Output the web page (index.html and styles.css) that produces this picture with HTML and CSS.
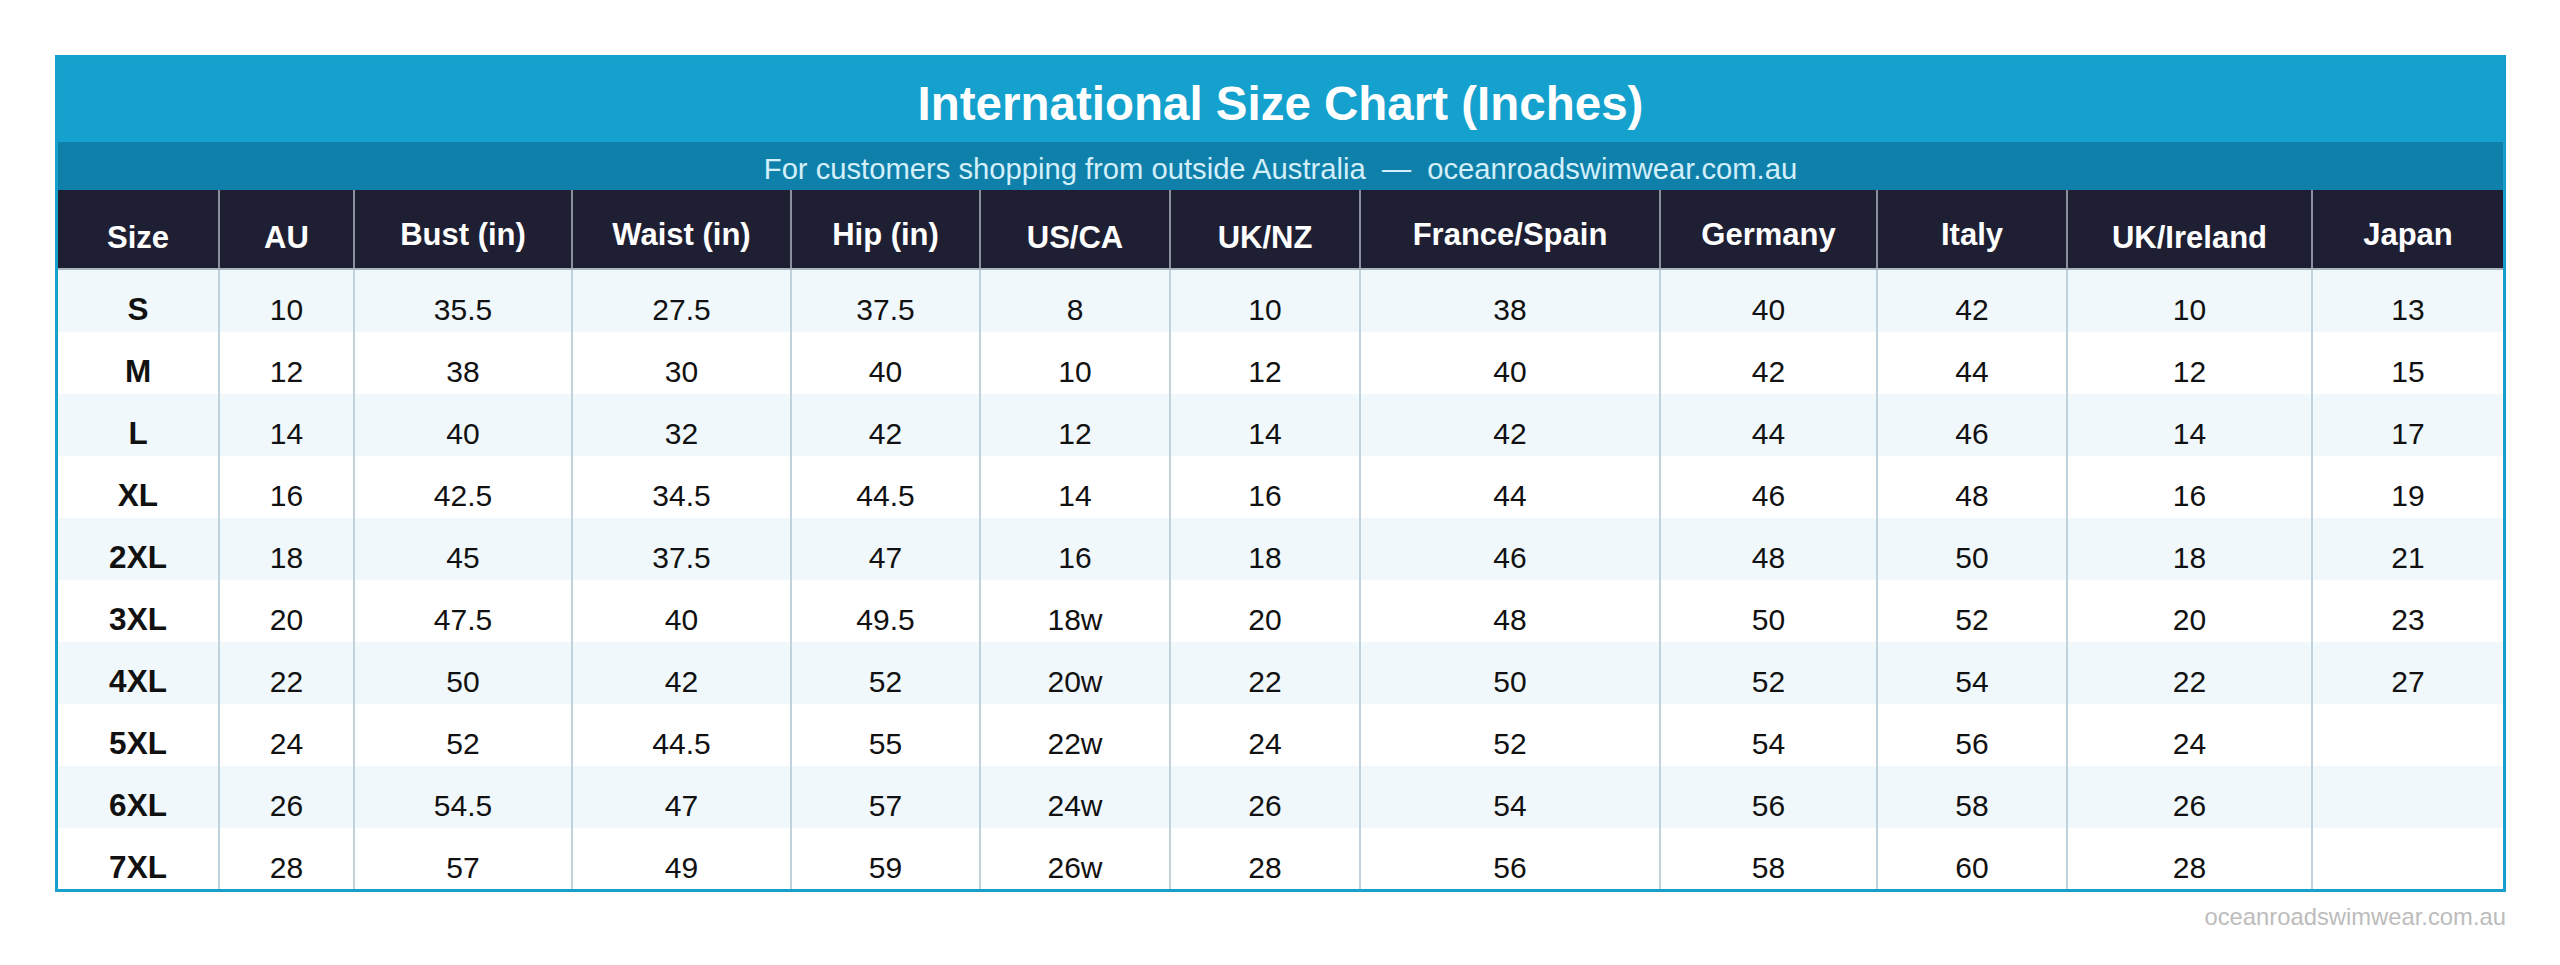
FILE: index.html
```html
<!DOCTYPE html>
<html lang="en">
<head>
<meta charset="utf-8">
<title>International Size Chart (Inches)</title>
<link rel="stylesheet" href="styles.css">
</head>
<body>
<div class="page">
  <div class="chart">
    <div class="title">International Size Chart (Inches)</div>
    <div class="subtitle">For customers shopping from outside Australia&nbsp; —&nbsp; oceanroadswimwear.com.au</div>
    <div class="row head">
      <div class="cell">Size</div>
      <div class="cell">AU</div>
      <div class="cell desc">Bust (in)</div>
      <div class="cell desc">Waist (in)</div>
      <div class="cell desc">Hip (in)</div>
      <div class="cell">US/CA</div>
      <div class="cell">UK/NZ</div>
      <div class="cell desc">France/Spain</div>
      <div class="cell desc">Germany</div>
      <div class="cell desc">Italy</div>
      <div class="cell">UK/Ireland</div>
      <div class="cell desc">Japan</div>
    </div>
    <div class="row alt"><div class="cell size">S</div><div class="cell">10</div><div class="cell">35.5</div><div class="cell">27.5</div><div class="cell">37.5</div><div class="cell">8</div><div class="cell">10</div><div class="cell">38</div><div class="cell">40</div><div class="cell">42</div><div class="cell">10</div><div class="cell">13</div></div>
    <div class="row"><div class="cell size">M</div><div class="cell">12</div><div class="cell">38</div><div class="cell">30</div><div class="cell">40</div><div class="cell">10</div><div class="cell">12</div><div class="cell">40</div><div class="cell">42</div><div class="cell">44</div><div class="cell">12</div><div class="cell">15</div></div>
    <div class="row alt"><div class="cell size">L</div><div class="cell">14</div><div class="cell">40</div><div class="cell">32</div><div class="cell">42</div><div class="cell">12</div><div class="cell">14</div><div class="cell">42</div><div class="cell">44</div><div class="cell">46</div><div class="cell">14</div><div class="cell">17</div></div>
    <div class="row"><div class="cell size">XL</div><div class="cell">16</div><div class="cell">42.5</div><div class="cell">34.5</div><div class="cell">44.5</div><div class="cell">14</div><div class="cell">16</div><div class="cell">44</div><div class="cell">46</div><div class="cell">48</div><div class="cell">16</div><div class="cell">19</div></div>
    <div class="row alt"><div class="cell size">2XL</div><div class="cell">18</div><div class="cell">45</div><div class="cell">37.5</div><div class="cell">47</div><div class="cell">16</div><div class="cell">18</div><div class="cell">46</div><div class="cell">48</div><div class="cell">50</div><div class="cell">18</div><div class="cell">21</div></div>
    <div class="row"><div class="cell size">3XL</div><div class="cell">20</div><div class="cell">47.5</div><div class="cell">40</div><div class="cell">49.5</div><div class="cell">18w</div><div class="cell">20</div><div class="cell">48</div><div class="cell">50</div><div class="cell">52</div><div class="cell">20</div><div class="cell">23</div></div>
    <div class="row alt"><div class="cell size">4XL</div><div class="cell">22</div><div class="cell">50</div><div class="cell">42</div><div class="cell">52</div><div class="cell">20w</div><div class="cell">22</div><div class="cell">50</div><div class="cell">52</div><div class="cell">54</div><div class="cell">22</div><div class="cell">27</div></div>
    <div class="row"><div class="cell size">5XL</div><div class="cell">24</div><div class="cell">52</div><div class="cell">44.5</div><div class="cell">55</div><div class="cell">22w</div><div class="cell">24</div><div class="cell">52</div><div class="cell">54</div><div class="cell">56</div><div class="cell">24</div><div class="cell"></div></div>
    <div class="row alt"><div class="cell size">6XL</div><div class="cell">26</div><div class="cell">54.5</div><div class="cell">47</div><div class="cell">57</div><div class="cell">24w</div><div class="cell">26</div><div class="cell">54</div><div class="cell">56</div><div class="cell">58</div><div class="cell">26</div><div class="cell"></div></div>
    <div class="row last"><div class="cell size">7XL</div><div class="cell">28</div><div class="cell">57</div><div class="cell">49</div><div class="cell">59</div><div class="cell">26w</div><div class="cell">28</div><div class="cell">56</div><div class="cell">58</div><div class="cell">60</div><div class="cell">28</div><div class="cell"></div></div>
  </div>
  <div class="footer">oceanroadswimwear.com.au</div>
</div>
</body>
</html>
```

FILE: styles.css
```css
* { box-sizing: border-box; }

html, body {
  margin: 0;
  padding: 0;
  background: #ffffff;
}

body {
  font-family: "Liberation Sans", Arial, sans-serif;
  color: #111111;
}

.page {
  padding: 55px 54px 0 55px;
}

.chart {
  border: 3px solid #18a0cc;
  background: #ffffff;
}

.title {
  background: #15a1cd;
  color: #ffffff;
  font-weight: 700;
  font-size: 47.5px;
  line-height: 76px;
  height: 84px;
  padding-top: 8px;
  text-align: center;
  white-space: nowrap;
}

.subtitle {
  background: #0f80aa;
  color: #d3effa;
  font-size: 29.2px;
  line-height: 40px;
  height: 48px;
  padding-top: 7px;
  text-align: center;
  white-space: nowrap;
}

.row {
  display: grid;
  grid-template-columns: 160px 135px 218px 219px 189px 190px 190px 300px 217px 190px 245px 192px;
  height: 62px;
  background: #ffffff;
}

.row.alt {
  background: #f0f8fc;
}

.row.last {
  height: 61px;
}

.cell {
  text-align: center;
  white-space: nowrap;
  font-size: 30px;
  line-height: 40px;
  padding-top: 19.5px;
  border-left: 2px solid #c2d2dc;
}

.cell:first-child {
  border-left: none;
}

.cell.size {
  font-weight: 700;
  font-size: 31.5px;
  padding-top: 18.5px;
}

.row.head {
  height: 80px;
  background: #1f1f33;
  border-bottom: 2px solid #a9b6c0;
}

.row.head .cell {
  color: #ffffff;
  font-weight: 700;
  font-size: 31px;
  padding-top: 27.5px;
  border-left-color: #8a909e;
}

.row.head .cell.desc {
  padding-top: 24.5px;
}

.footer {
  text-align: right;
  color: #bcbcbc;
  font-size: 23.8px;
  line-height: 30px;
  margin-top: 10px;
}
```
